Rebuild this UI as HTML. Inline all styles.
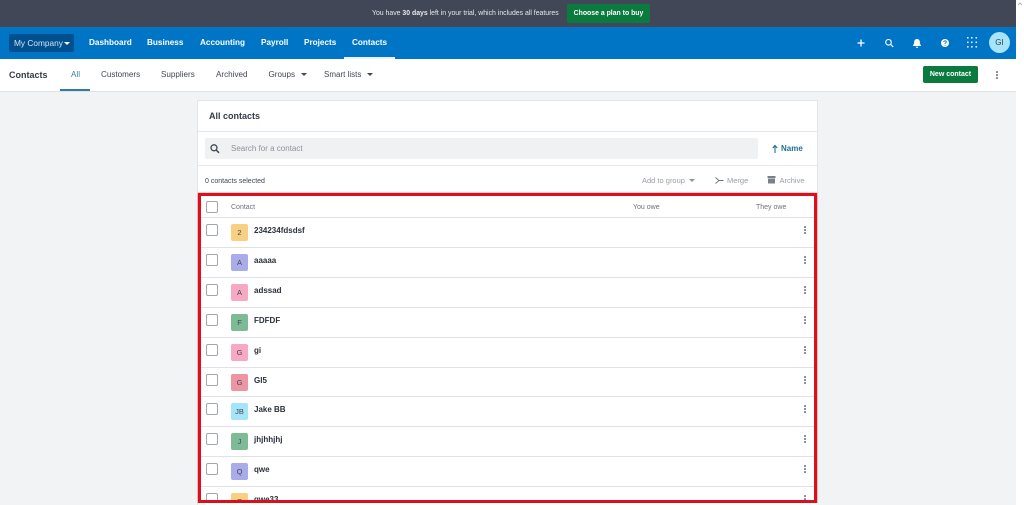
<!DOCTYPE html>
<html><head><meta charset="utf-8"><title>Contacts</title>
<style>
html,body{margin:0;padding:0}
body{width:1024px;height:505px;overflow:hidden;position:relative;background:#fff;font-family:"Liberation Sans",sans-serif;color:#404756}
#page{position:absolute;left:0;top:0;width:1016px;height:505px;background:#f2f3f5;overflow:hidden;filter:blur(.35px)}
.a{position:absolute;white-space:nowrap}
.nav{top:37px;font-size:8.2px;line-height:12px;font-weight:bold;color:#fff}
.sub{top:69px;font-size:8.1px;line-height:12px;color:#404756}
.car{position:absolute;width:0;height:0;border-left:3px solid transparent;border-right:3px solid transparent;border-top:3px solid currentColor}
.hl{position:absolute;left:201px;width:613px;height:1px;background:#e1e2e5}
.cb{position:absolute;left:206px;width:10px;height:10px;border:1px solid #a3a7b0;border-radius:2px;background:#fff}
.av{position:absolute;left:231px;width:17px;height:17px;border-radius:2px;font-size:7.5px;line-height:17px;text-align:center;color:#404756}
.nm{position:absolute;left:254px;font-size:8px;line-height:12px;font-weight:bold;color:#2b303b;white-space:nowrap;margin-top:1px}
.kb{position:absolute;left:804px;width:2px;height:8px}
.kb i,.kb2 i{display:block;width:1.6px;height:1.6px;background:#7a7f89;border-radius:50%;margin-bottom:1.4px}
.th{top:202px;font-size:7px;line-height:12px;color:#6b7280}
.gr{top:175px;font-size:7.5px;line-height:12px;color:#9a9ea8}
</style></head><body>
<div id="page">
<div class="a" style="left:0;top:0;width:1016px;height:27px;background:#414756"></div>
<div class="a" style="left:372px;top:8px;font-size:6.9px;line-height:12px;color:#e8e9eb">You have <b>30 days</b> left in your trial, which includes all features</div>
<div class="a" style="left:567px;top:4px;width:83px;height:19px;background:#0b7a3e;border-radius:2px;color:#fff;font-size:6.9px;font-weight:bold;line-height:19px;text-align:center">Choose a plan to buy</div>

<div class="a" style="left:0;top:27px;width:1016px;height:32px;background:#0075c6"></div>
<div class="a" style="left:9px;top:34px;width:65px;height:18px;background:#00508f;border-radius:2px"></div>
<div class="a" style="left:14px;top:37px;font-size:8.3px;line-height:12px;color:#d3e4f2">My Company</div>
<div class="car" style="left:64px;top:42px;color:#fff"></div>
<div class="a nav" style="left:89px">Dashboard</div>
<div class="a nav" style="left:147px">Business</div>
<div class="a nav" style="left:200px">Accounting</div>
<div class="a nav" style="left:261px">Payroll</div>
<div class="a nav" style="left:304px">Projects</div>
<div class="a nav" style="left:352px">Contacts</div>
<div class="a" style="left:344px;top:57px;width:51px;height:2px;background:#e8f2fa"></div>

<svg class="a" style="left:850px;top:32px" width="120" height="22" viewBox="0 0 120 22" fill="none">
<path d="M11 7.5v7M7.5 11h7" stroke="#fff" stroke-width="1.3"/>
<circle cx="38.5" cy="10.3" r="2.8" stroke="#fff" stroke-width="1.1"/><path d="M40.6 12.4l2.6 2.6" stroke="#fff" stroke-width="1.2"/>
<path d="M67 7c-1.9 0-2.8 1.4-2.8 3.2 0 1.5-.7 2.6-1.2 3.2v.6h8v-.6c-.5-.6-1.2-1.7-1.2-3.2C69.8 8.4 68.9 7 67 7z" fill="#fff"/><path d="M65.8 14.8h2.4c0 .7-.5 1.2-1.2 1.2s-1.2-.5-1.2-1.2z" fill="#fff"/>
<circle cx="95" cy="11" r="4" fill="#fff"/><path d="M93.7 10c.1-.8.6-1.2 1.3-1.2s1.3.4 1.3 1.1c0 1-1.3 1-1.3 2" stroke="#0075c6" stroke-width=".9"/><circle cx="95" cy="13.2" r=".5" fill="#0075c6"/>
</svg>
<svg class="a" style="left:966px;top:37px" width="13" height="12" fill="#dbe9f5">
<rect x="1" y="0" width="1.6" height="1.6"/><rect x="5" y="0" width="1.6" height="1.6"/><rect x="9.5" y="0" width="1.6" height="1.6"/>
<rect x="1" y="4.5" width="1.6" height="1.6"/><rect x="5" y="4.5" width="1.6" height="1.6"/><rect x="9.5" y="4.5" width="1.6" height="1.6"/>
<rect x="1" y="9" width="1.6" height="1.6"/><rect x="5" y="9" width="1.6" height="1.6"/><rect x="9.5" y="9" width="1.6" height="1.6"/>
</svg>
<div class="a" style="left:989px;top:32px;width:21px;height:21px;border-radius:50%;background:#a5e4f9;color:#36404f;font-size:8px;line-height:22px;text-align:center">GI</div>

<div class="a" style="left:0;top:59px;width:1016px;height:32px;background:#fff;border-bottom:1px solid #dfe1e4"></div>
<div class="a" style="left:9px;top:69px;font-size:9px;line-height:12px;font-weight:bold;color:#343b48">Contacts</div>
<div class="a sub" style="left:71px;color:#3f7f9f">All</div>
<div class="a" style="left:60px;top:89px;width:30px;height:2px;background:#2c7ea6"></div>
<div class="a sub" style="left:101px">Customers</div>
<div class="a sub" style="left:161px">Suppliers</div>
<div class="a sub" style="left:216px">Archived</div>
<div class="a sub" style="left:268.5px">Groups</div>
<div class="car" style="left:301px;top:73px;color:#404756"></div>
<div class="a sub" style="left:324px;font-size:8px">Smart lists</div>
<div class="car" style="left:367px;top:73px;color:#404756"></div>
<div class="a" style="left:923px;top:66px;width:55px;height:17px;background:#0b7a3e;border-radius:2px;color:#fff;font-size:7px;font-weight:bold;line-height:18px;text-align:center">New contact</div>
<div class="a kb2" style="left:996px;top:71px"><i></i><i></i><i></i></div>

<div class="a" style="left:198px;top:101px;width:619px;height:404px;background:#fff;box-shadow:0 0 0 1px #e3e5e8"></div>
<div class="a" style="left:209px;top:110px;font-size:9px;line-height:12px;font-weight:bold;color:#343b48">All contacts</div>
<div class="a" style="left:198px;top:131px;width:620px;height:1px;background:#e6e7ea"></div>
<div class="a" style="left:205px;top:138px;width:553px;height:21px;background:#f0f1f3;border-radius:2px"></div>
<svg class="a" style="left:209px;top:143px" width="12" height="11" fill="none"><circle cx="5" cy="4.8" r="3" stroke="#404756" stroke-width="1.3"/><path d="M7.3 7.1L10 9.8" stroke="#404756" stroke-width="1.5"/></svg>
<div class="a" style="left:231px;top:143px;font-size:8px;line-height:12px;color:#8d919b">Search for a contact</div>
<svg class="a" style="left:771px;top:144px" width="8" height="10" fill="none"><path d="M4 9V2M1.8 4L4 1.5 6.2 4" stroke="#1f6f8f" stroke-width="1.1"/></svg>
<div class="a" style="left:781px;top:143px;font-size:8px;line-height:12px;font-weight:bold;color:#24708f">Name</div>
<div class="a" style="left:198px;top:165px;width:620px;height:1px;background:#e6e7ea"></div>
<div class="a" style="left:205px;top:176px;font-size:7px;line-height:12px;color:#404756">0 contacts selected</div>
<div class="a gr" style="left:642px">Add to group</div>
<div class="car" style="left:689px;top:179px;color:#8f939d"></div>
<svg class="a" style="left:715px;top:176px" width="9" height="9" fill="none"><path d="M.5 1.5L4 4.5 .5 7.5M4 4.5h4.5" stroke="#6b7280" stroke-width=".9"/></svg>
<div class="a gr" style="left:727px">Merge</div>
<svg class="a" style="left:767px;top:176px" width="9" height="8"><rect x=".5" y="0" width="8" height="2" fill="#7a7f89"/><rect x="1" y="2.5" width="7" height="5" fill="#7a7f89"/></svg>
<div class="a gr" style="left:779.5px">Archive</div>

<div class="a th" style="left:231px">Contact</div>
<div class="a th" style="left:633px">You owe</div>
<div class="a th" style="left:756px">They owe</div>
<div class="cb" style="top:201px"></div>

<div class="hl" style="top:217px"></div><div class="hl" style="top:247px"></div><div class="hl" style="top:277px"></div><div class="hl" style="top:307px"></div><div class="hl" style="top:337px"></div><div class="hl" style="top:367px"></div><div class="hl" style="top:396px"></div><div class="hl" style="top:426px"></div><div class="hl" style="top:456px"></div><div class="hl" style="top:486px"></div>

<div class="cb" style="top:224px"></div><div class="av" style="top:224px;background:#f8d083">2</div><div class="nm" style="top:224px">234234fdsdsf</div><div class="kb" style="top:226px"><i></i><i></i><i></i></div>
<div class="cb" style="top:254px"></div><div class="av" style="top:254px;background:#a9ace9">A</div><div class="nm" style="top:254px">aaaaa</div><div class="kb" style="top:256px"><i></i><i></i><i></i></div>
<div class="cb" style="top:284px"></div><div class="av" style="top:284px;background:#f8a9c2">A</div><div class="nm" style="top:284px">adssad</div><div class="kb" style="top:286px"><i></i><i></i><i></i></div>
<div class="cb" style="top:314px"></div><div class="av" style="top:314px;background:#7dbb97">F</div><div class="nm" style="top:314px">FDFDF</div><div class="kb" style="top:316px"><i></i><i></i><i></i></div>
<div class="cb" style="top:344px"></div><div class="av" style="top:344px;background:#f8a9c2">G</div><div class="nm" style="top:344px">gi</div><div class="kb" style="top:346px"><i></i><i></i><i></i></div>
<div class="cb" style="top:374px"></div><div class="av" style="top:374px;background:#ee95a3">G</div><div class="nm" style="top:374px">GI5</div><div class="kb" style="top:376px"><i></i><i></i><i></i></div>
<div class="cb" style="top:403px"></div><div class="av" style="top:403px;background:#a5e4f9">JB</div><div class="nm" style="top:403px">Jake BB</div><div class="kb" style="top:405px"><i></i><i></i><i></i></div>
<div class="cb" style="top:433px"></div><div class="av" style="top:433px;background:#7dbb97">J</div><div class="nm" style="top:433px">jhjhhjhj</div><div class="kb" style="top:435px"><i></i><i></i><i></i></div>
<div class="cb" style="top:463px"></div><div class="av" style="top:463px;background:#a9ace9">Q</div><div class="nm" style="top:463px">qwe</div><div class="kb" style="top:465px"><i></i><i></i><i></i></div>
<div class="cb" style="top:493px"></div><div class="av" style="top:493px;background:#f8d083">Q</div><div class="nm" style="top:493px">qwe33</div><div class="kb" style="top:495px"><i></i><i></i><i></i></div>

<div class="a" style="left:198px;top:193px;width:613px;height:304px;border:3px solid #dc101c;box-shadow:0 0 1px #dc101c"></div>
<div class="a" style="left:198px;top:503px;width:620px;height:2px;background:#fff"></div>
</div>
<svg class="a" style="left:1016px;top:0" width="8" height="505"><path d="M2 5l2-2 2 2" fill="none" stroke="#b5b5b5" stroke-width="1"/></svg>
</body></html>
